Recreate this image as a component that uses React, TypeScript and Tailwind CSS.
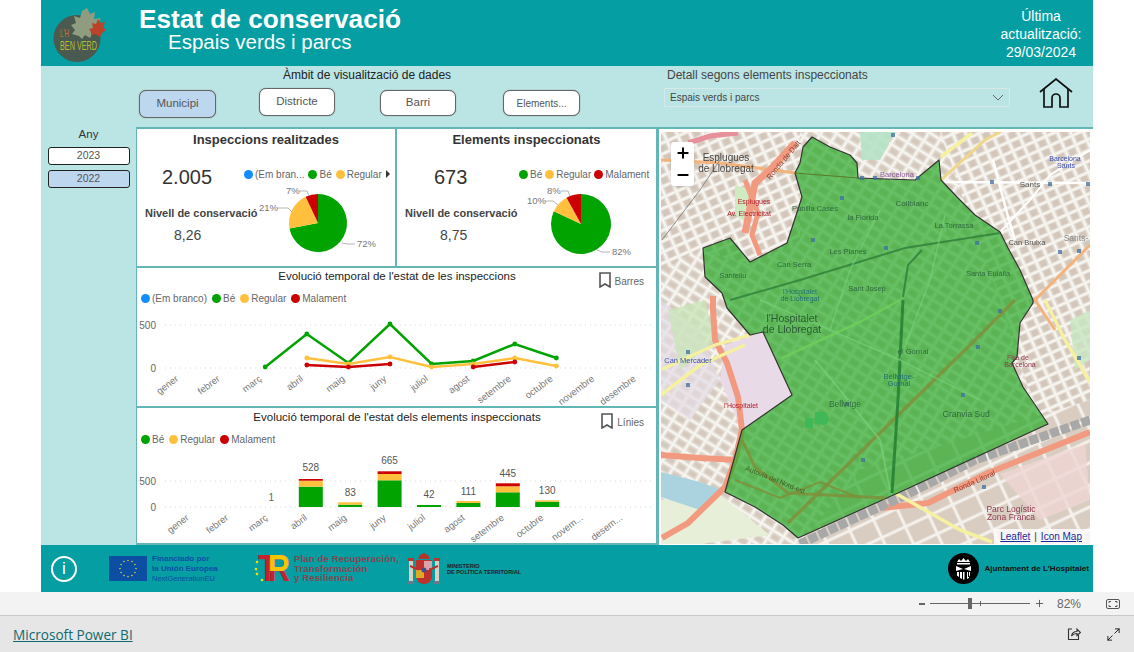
import React from 'react';
import { Maximize2, Minus, Plus } from 'lucide-react';

const GREEN = '#00a300';
const YELLOW = '#ffc13d';
const RED = '#cc0000';
const BLUE = '#118dff';
const MONTHS = ['gener', 'febrer', 'març', 'abril', 'maig', 'juny', 'juliol', 'agost', 'setembre', 'octubre', 'novembre', 'desembre'];

type LegendItem = { label: string; color: string };

function Legend({ items, gap }: { items: LegendItem[]; gap: string }) {
    return (
        <div className={`flex items-center ${gap}`}>
            {items.map((item) => (
                <div key={item.label} className="flex items-center gap-[2px] text-[#666] whitespace-nowrap text-[10px]">
                    <span className="w-[9px] h-[9px] rounded-full" style={{ background: item.color }} />
                    <span>{item.label}</span>
                </div>
            ))}
        </div>
    );
}

function slice(cx: number, cy: number, r: number, from: number, to: number) {
    const a0 = (from / 100) * Math.PI * 2 - Math.PI / 2;
    const a1 = (to / 100) * Math.PI * 2 - Math.PI / 2;
    const large = to - from > 50 ? 1 : 0;
    return `M${cx} ${cy}L${cx + r * Math.cos(a0)} ${cy + r * Math.sin(a0)}A${r} ${r} 0 ${large} 1 ${cx + r * Math.cos(a1)} ${cy + r * Math.sin(a1)}Z`;
}

type PieLabel = { text: string; x: number; y: number; line: string };

function Pie({ box, cx, cy, r, values, labels }: { box: string; cx: number; cy: number; r: number; values: number[]; labels: PieLabel[] }) {
    const colors = [GREEN, YELLOW, RED];
    let acc = 0;
    return (
        <svg viewBox={box} className="w-[135px] h-[85px] overflow-visible">
            {values.map((v, i) => {
                const d = slice(cx, cy, r, acc, acc + v);
                acc += v;
                return <path key={i} d={d} fill={colors[i]} />;
            })}
            {labels.map((l) => (
                <g key={l.text}>
                    <polyline points={l.line} fill="none" stroke="#b5b5b5" strokeWidth="1" />
                    <text x={l.x} y={l.y} fontSize="9.5" fill="#777">{l.text}</text>
                </g>
            ))}
        </svg>
    );
}

function KpiCard(props: {
    title: string; value: string; score: string; legend: LegendItem[]; more?: boolean; width: string;
    valuePad: string; scorePad: string; labelPad: string; legendPad: string; legendGap: string; children: React.ReactNode;
}) {
    return (
        <div className={`${props.width} h-[141px] border-x border-y-2 border-[#62b6b6] bg-white flex flex-col`}>
            <div className="h-[21px] text-center text-[13px] font-bold text-[#333] leading-[21px]">{props.title}</div>
            <div className="flex flex-1">
                <div className="w-[121px] shrink-0 flex flex-col">
                    <div className={`mt-[14px] text-[20px] leading-[26px] text-[#333] ${props.valuePad}`}>{props.value}</div>
                    <div className={`mt-[16px] text-[11px] font-bold text-[#444] leading-[14px] whitespace-nowrap ${props.labelPad}`}>Nivell de conservació</div>
                    <div className={`mt-[6px] text-[14px] leading-[18px] text-[#444] ${props.scorePad}`}>{props.score}</div>
                </div>
                <div className="flex flex-col flex-1">
                    <div className={`mt-[17px] h-[14px] flex items-center ${props.legendPad}`}>
                        <Legend items={props.legend} gap={props.legendGap} />
                        {props.more && <span className="ml-[4px] w-0 h-0 border-y-[4px] border-y-transparent border-l-[4px] border-l-[#333]" />}
                    </div>
                    {props.children}
                </div>
            </div>
        </div>
    );
}

function ChartToggle({ label }: { label: string }) {
    return (
        <div className="flex items-start justify-end gap-[4px] pr-[12px] pt-[3px] text-[10px] text-[#666]">
            <svg width="12" height="16" viewBox="0 0 12 16" fill="none" stroke="#555" strokeWidth="1.6">
                <path d="M1 1h10v14l-5-3-5 3z" />
            </svg>
            <span className="mt-[2px]">{label}</span>
        </div>
    );
}

function ChartCard({ title, toggle, height, headHeight, legend, legendGap, children }: { title: string; toggle: string; height: string; headHeight: string; legend: LegendItem[]; legendGap: string; children: React.ReactNode }) {
    return (
        <div className={`${height} border-x border-b-2 border-[#62b6b6] bg-white flex flex-col pl-[1px]`}>
            <div className={`shrink-0 flex flex-col justify-end ${headHeight}`}>
                <div className="grid grid-cols-[1fr_auto_1fr] h-[16px]">
                    <span />
                    <span className="text-[11.5px] leading-[14px] text-[#222]">{title}</span>
                    <ChartToggle label={toggle} />
                </div>
                <div className="pl-[3px] pt-[6px]">
                    <Legend items={legend} gap={legendGap} />
                </div>
            </div>
            {children}
        </div>
    );
}

function AxisLabels({ xs, y, labels }: { xs: number[]; y: number; labels: string[] }) {
    return (
        <>
            {labels.map((m, i) => (
                <text key={m} x={xs[i] - 3} y={y} fontSize="9.5" fill="#777" textAnchor="end" transform={`rotate(-37 ${xs[i] - 3} ${y})`}>{m}</text>
            ))}
        </>
    );
}

function LineChart() {
    const x = (i: number) => 182 + i * 41.6;
    const xs = MONTHS.map((_, i) => x(i));
    const series = [
        { color: GREEN, segs: [[[2, 367], [3, 334], [4, 363], [5, 324], [6, 364], [7, 361], [8, 344], [9, 358]]] },
        { color: YELLOW, segs: [[[3, 358], [4, 364], [5, 357], [6, 367], [7, 364], [8, 358], [9, 366]]] },
        { color: RED, segs: [[[3, 365], [4, 367], [5, 364]], [[7, 367], [8, 362]]] },
    ];
    return (
        <svg viewBox="138 308 517 98" className="w-[517px] h-[98px] overflow-visible">
            {[325, 368].map((y) => <line key={y} x1="165" x2="652" y1={y} y2={y} stroke="#d8d8d8" strokeDasharray="1 4" />)}
            <text x="156" y="329" fontSize="10" fill="#666" textAnchor="end">500</text>
            <text x="156" y="372" fontSize="10" fill="#666" textAnchor="end">0</text>
            {series.map((s) => s.segs.map((seg, k) => (
                <g key={s.color + k}>
                    <polyline points={seg.map(([m, y]) => `${x(m)},${y}`).join(' ')} fill="none" stroke={s.color} strokeWidth="2.5" />
                    {seg.map(([m, y]) => <circle key={m} cx={x(m)} cy={y} r="2.4" fill={s.color} />)}
                </g>
            )))}
            <AxisLabels xs={xs} y={380} labels={MONTHS} />
        </svg>
    );
}

function BarChart() {
    const x = (i: number) => 192.6 + i * 39.4;
    const xs = MONTHS.map((_, i) => x(i));
    const labels = MONTHS.map((m) => (m === 'novembre' ? 'novem...' : m === 'desembre' ? 'desem...' : m));
    // month, [green top, yellow top, red top], total text
    const bars: [number, number[], string, number][] = [
        [3, [486.7, 480.7, 479], '528', 468],
        [4, [504.7, 502.3, 502.3], '83', 493],
        [5, [480.3, 474, 471.3], '665', 461],
        [6, [505, 505, 505], '42', 495],
        [7, [503, 501, 501], '111', 492],
        [8, [492.3, 486.3, 483.3], '445', 474],
        [9, [501.7, 500.3, 500.3], '130', 491],
    ];
    return (
        <svg viewBox="138 450 517 92" className="w-[517px] h-[92px] overflow-visible">
            {[481, 507].map((y) => <line key={y} x1="165" x2="652" y1={y} y2={y} stroke="#d8d8d8" strokeDasharray="1 4" />)}
            <text x="156" y="485" fontSize="10" fill="#666" textAnchor="end">500</text>
            <text x="156" y="511" fontSize="10" fill="#666" textAnchor="end">0</text>
            <text x={x(2)} y="501" fontSize="10" fill="#666" textAnchor="middle">1</text>
            {bars.map(([m, tops, text, ty]) => (
                <g key={m}>
                    <rect x={x(m) - 12} y={tops[0]} width="24" height={507 - tops[0]} fill={GREEN} />
                    <rect x={x(m) - 12} y={tops[1]} width="24" height={tops[0] - tops[1]} fill={YELLOW} />
                    <rect x={x(m) - 12} y={tops[2]} width="24" height={tops[1] - tops[2]} fill={RED} />
                    <text x={x(m)} y={ty + 3} fontSize="10" fill="#555" textAnchor="middle">{text}</text>
                </g>
            ))}
            <AxisLabels xs={xs} y={519} labels={labels} />
        </svg>
    );
}

const AREA = '812,137 830,147 850,155 857,163 858,178 915,180 939,160 941,180 957,197 975,215 1000,232 1008,248 1020,270 1033,300 1033,303 1020,323 1017,357 1012,363 1023,387 1048,424 898,493 798,538 783,525 755,507 725,492 742,430 792,395 763,332 750,335 727,308 722,293 705,277 703,248 730,238 750,262 787,243 802,197 795,173 800,163 803,147';

const MAP_LABELS: [string, number, number, number, string][] = [
    ['Esplugues', 726, 161, 10, '#444'], ['de Llobregat', 726, 172, 10, '#444'],
    ['Barcelona', 897, 177, 7.5, '#8a5a9a'], ['Collblanc', 912, 206, 8, '#2f6a3f'],
    ['Pubilla Cases', 815, 211, 7.5, '#2f6a3f'], ['la Florida', 863, 220, 7.5, '#2f6a3f'],
    ['La Torrassa', 954, 228, 7.5, '#2f6a3f'], ['Les Planes', 848, 254, 7.5, '#2f6a3f'],
    ['Can Serra', 794, 267, 7.5, '#2f6a3f'], ['Sanfeliu', 733, 278, 7.5, '#2f6a3f'],
    ['Sant Josep', 867, 291, 7.5, '#2f6a3f'], ['Santa Eulàlia', 988, 276, 7.5, '#2f6a3f'],
    ['Sants', 1030, 187, 8, '#555'], ['Can Bruixa', 1027, 245, 7.5, '#555'], ['Sants-', 1076, 241, 8.5, '#888'],
    ['Barcelona', 1065, 161, 7, '#3a4fb0'], ['Sants', 1066, 168, 7, '#3a4fb0'],
    ["l'Hospitalet", 800, 294, 7, '#1f6f70'], ['de Llobregat', 800, 301, 7, '#1f6f70'],
    ["l'Hospitalet", 792, 322, 10.5, '#2a5a35'], ['de Llobregat', 792, 333, 10.5, '#2a5a35'],
    ['Can Mercader', 688, 363, 7.5, '#3a4fb0'], ['el Gornal', 913, 354, 7.5, '#2f6a3f'],
    ['Bellvitge-', 899, 379, 7.5, '#1f6f70'], ['Gornal', 899, 386, 7.5, '#1f6f70'],
    ['Bellvitge', 845, 407, 8.5, '#2f6a3f'], ['Granvia Sud', 966, 417, 8.5, '#2f6a3f'],
    ['Parc Logístic', 1011, 512, 8.5, '#8f3a50'], ['Zona Franca', 1011, 520, 8.5, '#8f3a50'],
    ['Esplugues', 754, 204, 7, '#b3202c'], ['Av. Electricitat', 749, 216, 7, '#b3202c'],
    ["l'Hospitalet", 741, 408, 7, '#b3202c'], ['Fira de', 1018, 360, 7, '#8f3a50'], ['Barcelona', 1020, 367, 7, '#8f3a50'],
];

const METRO = [[862, 178], [875, 178], [918, 178], [992, 182], [1050, 184], [1088, 184], [893, 135], [842, 198], [813, 240], [886, 248], [977, 243], [847, 404], [863, 460], [963, 395], [978, 347], [1000, 311], [688, 352], [688, 385], [984, 487], [1060, 252], [1079, 251], [1079, 358]];

function MapView() {
    return (
        <div className="relative w-[429px] h-[412px] overflow-hidden">
            <svg viewBox="661 132 429 412" className="w-[429px] h-[412px] blur-[0.35px]">
                <defs>
                    <pattern id="blocksA" width="13" height="10" patternUnits="userSpaceOnUse" patternTransform="rotate(32)">
                        <rect width="13" height="10" fill="#f7f5f0" />
                        <rect x="1" y="1" width="11" height="8" fill="#e6e0d8" />
                        <rect x="2.500" y="2.500" width="8" height="5" fill="#d5c9bd" />
                    </pattern>
                    <pattern id="blocksB" width="12" height="10" patternUnits="userSpaceOnUse" patternTransform="rotate(-24)">
                        <rect width="12" height="10" fill="#f7f5f0" />
                        <rect x="1" y="1" width="10" height="8" fill="#e8e1da" />
                        <rect x="2.500" y="2" width="7" height="6" fill="#d3c7bb" />
                    </pattern>
                    <pattern id="blocksC" width="26" height="20" patternUnits="userSpaceOnUse" patternTransform="rotate(-25)">
                        <rect width="26" height="20" fill="#f5f1ec" />
                        <rect x="1.500" y="1.500" width="23" height="17" fill="#d9cdc2" />
                    </pattern>
                </defs>
                <rect x="661" y="132" width="429" height="412" fill="url(#blocksA)" />
                <polygon points="940,132 1090,132 1090,440 1040,425 1000,300 960,190" fill="url(#blocksB)" />
                <polygon points="661,132 800,132 800,240 750,265 700,250 661,270" fill="url(#blocksB)" />
                <polygon points="860,470 1090,400 1090,544 800,544" fill="url(#blocksC)" />
                <polygon points="1000,474 1085,444 1090,500 1040,520" fill="#efd6d3" opacity="0.8" />
                <polygon points="763,332 792,395 742,430 720,380 725,345" fill="#e8dae6" />
                <polygon points="661,300 700,330 720,380 690,420 661,400" fill="#e4dbe4" opacity="0.7" />
                <polygon points="661,500 720,495 770,535 700,544 661,544" fill="#e7efd8" />
                <polygon points="661,472 700,482 724,491 700,510 661,497" fill="#aad3df" />
                <polygon points="860,132 895,132 880,160 862,160" fill="#b5e3c6" opacity="0.9" />
                <polygon points="735,185 752,190 750,225 735,215" fill="#cfeac0" />
                <polygon points="668,310 705,300 715,340 680,370" fill="#c8e6b8" opacity="0.75" />
                <polygon points="1070,320 1090,310 1090,360 1075,370" fill="#c8e6c0" opacity="0.8" />
                <polyline points="688,143 710,136 738,133" fill="none" stroke="#e88f9c" strokeWidth="5" />
                <polyline points="661,160 720,163 795,173" fill="none" stroke="#f2b37c" strokeWidth="3" />
                <polyline points="795,143 770,170 755,183 745,233" fill="none" stroke="#f19a80" strokeWidth="7" />
                <polyline points="745,180 758,213 752,235 760,255" fill="none" stroke="#f19a80" strokeWidth="5" />
                <polyline points="713,296 713,310 715,340 727,363 738,397 742,430 735,460 725,487 688,523 662,538" fill="none" stroke="#f19a80" strokeWidth="6" />
                <polyline points="661,455 700,458 738,460" fill="none" stroke="#f19a80" strokeWidth="6" />
                <polyline points="1090,432 988,473 928,503 882,508" fill="none" stroke="#f19a80" strokeWidth="6" />
                <polyline points="1090,420 975,460 902,497 860,516 800,544" fill="none" stroke="#a8a8a8" strokeWidth="9" strokeDasharray="9 2" />
                <polyline points="895,493 960,530 992,542" fill="none" stroke="#f5f1a0" strokeWidth="3.500" />
                <polyline points="1045,300 1065,340 1090,382" fill="none" stroke="#f5f1a0" strokeWidth="3.500" />
                <polyline points="941,157 972,133" fill="none" stroke="#f5f1a0" strokeWidth="3.500" />
                <polyline points="941,180 985,140 1000,132" fill="none" stroke="#f0d68a" strokeWidth="3" />
                <polyline points="661,395 700,365 745,345" fill="none" stroke="#f5f1a0" strokeWidth="3.500" />
                <polyline points="661,370 715,345 750,335" fill="none" stroke="#f5f1a0" strokeWidth="3" />
                <polyline points="941,182 1090,183" fill="none" stroke="#ffffff" strokeWidth="2.500" />
                <polyline points="993,160 1007,213 1015,240" fill="none" stroke="#ffffff" strokeWidth="2.500" />
                <polyline points="1090,245 1050,285 1035,300 1055,330" fill="none" stroke="#f2b37c" strokeWidth="3" />
                <polyline points="662,240 700,190 720,160" fill="none" stroke="#777" strokeWidth="0.8" />
                <polyline points="1090,150 1050,175 1030,200 1000,232" fill="none" stroke="#ffffff" strokeWidth="2" />
                <polygon points={AREA} fill="#22a822" fillOpacity="0.68" stroke="#333" strokeWidth="1.200" strokeLinejoin="round" />
                <polyline points="900,300 860,322 782,358" fill="none" stroke="#6fd05a" strokeWidth="2.500" opacity="0.8" />
                <polyline points="1015,300 970,345 888,425 788,523" fill="none" stroke="#7f8f3a" strokeWidth="3.500" opacity="0.8" />
                <polyline points="903,300 898,400 892,493" fill="none" stroke="#1f7a2f" strokeWidth="3" opacity="0.8" />
                <polyline points="730,300 800,280 905,248 1000,233" fill="none" stroke="#2f7d3a" strokeWidth="2" opacity="0.8" />
                <polyline points="922,250 908,265 903,297" fill="none" stroke="#2f7d3a" strokeWidth="2" opacity="0.8" />
                <polyline points="742,440 755,467 788,493 885,498" fill="none" stroke="#7f8f3a" strokeWidth="3" opacity="0.85" />
                <polyline points="735,480 780,498 820,482 860,498" fill="none" stroke="#7f8f3a" strokeWidth="2" opacity="0.85" />
                <polyline points="795,173 858,178" fill="none" stroke="#5c7a2a" strokeWidth="1.200" />
                <polyline points="815,360 840,390 880,440 890,490" fill="none" stroke="#7ad27a" strokeWidth="1.800" opacity="0.7" />
                <polyline points="760,300 830,330 900,360 980,400" fill="none" stroke="#7ad27a" strokeWidth="1.500" opacity="0.6" />
                <polyline points="880,210 850,270 830,330" fill="none" stroke="#7ad27a" strokeWidth="1.500" opacity="0.6" />
                <polyline points="945,215 930,280 900,360" fill="none" stroke="#7ad27a" strokeWidth="1.500" opacity="0.6" />
                <rect x="805" y="418" width="8" height="10" fill="#3fb857" />
                <rect x="815" y="412" width="10" height="12" fill="#3fb857" />
                <circle cx="823" cy="419" r="6" fill="#3fb857" />
                {METRO.map(([x, y]) => <rect key={`${x}-${y}`} x={x - 2} y={y - 2} width="4" height="4" fill="#3f6fa0" opacity="0.75" />)}
                {MAP_LABELS.map(([t, x, y, s, c]) => (
                    <text key={`${t}-${x}`} x={x} y={y} fontSize={s} fill={c} textAnchor="middle">{t}</text>
                ))}
                <text x="955" y="493" fontSize="7.500" fill="#8f3a30" transform="rotate(-24 955 493)">Ronda Litoral</text>
                <text x="745" y="470" fontSize="7" fill="#3f5a1f" transform="rotate(22 745 470)">Autovia del Nord-est</text>
                <text x="770" y="180" fontSize="7.500" fill="#8f3a30" transform="rotate(-50 770 180)">Ronda de Dalt</text>
            </svg>
            <div className="absolute left-[10px] top-[10px] w-[23px] h-[44px] bg-white rounded-[3px] flex flex-col items-center justify-around shadow">
                <Plus size={16} strokeWidth={3} className="text-black" />
                <Minus size={16} strokeWidth={3} className="text-black" />
            </div>
            <div className="absolute right-0 bottom-0 h-[15px] pl-[6px] pr-[8px] bg-white/80 flex items-center gap-[4px] text-[10px] text-[#333]">
                <span className="text-[#1a2a9c] underline">Leaflet</span>
                <span>|</span>
                <span className="text-[#1a2a9c] underline">Icon Map</span>
            </div>
        </div>
    );
}

function Logo() {
    return (
        <svg width="60" height="60" viewBox="50 6 60 60" className="overflow-visible">
            <circle cx="77" cy="38.500" r="23.500" fill="#4a5a50" />
            <polygon points="87,8 90,14 95,12 94,19 101,18 97,25 100,29 93,33 90,38 85,35 82,39 79,36 72,34 75,30 71,25 76,23 74,16 80,18 82,11" fill="#8f9c80" />
            <polygon points="98,19 101,23 105,22 103,27 106,30 102,33 100,37 95,34 91,36 91,32 89,29 93,28 92,23 96,24" fill="#b8452a" />
            <text x="60" y="37" fontSize="11" fill="#c4752c" textLength="9" lengthAdjust="spacingAndGlyphs">L'H</text>
            <text x="60" y="50" fontSize="12.500" fill="#b8bc30" textLength="37" lengthAdjust="spacingAndGlyphs">BEN VERD</text>
        </svg>
    );
}

function FilterButton({ label, className }: { label: string; className: string }) {
    return (
        <div className={`border border-[#666] rounded-[7px] flex items-center justify-center text-[#555] shadow-[0_0_1px_#666] ${className}`}>
            {label}
        </div>
    );
}

function EuFlag() {
    const stars = Array.from({ length: 12 }, (_, i) => i * Math.PI / 6);
    return (
        <svg width="38" height="25" viewBox="0 0 38 25">
            <rect width="38" height="25" fill="#0b4ea2" />
            {stars.map((a) => <circle key={a} cx={19 + 8 * Math.cos(a)} cy={12.5 + 8 * Math.sin(a)} r="0.8" fill="#d9d24a" />)}
        </svg>
    );
}

function TrLogo() {
    return (
        <svg width="35" height="29" viewBox="0 0 35 29" className="overflow-visible">
            <defs>
                <clipPath id="rTop"><rect x="12" y="0" width="24" height="17" /></clipPath>
            </defs>
            <text x="3" y="27" fontSize="36" fontWeight="700" fontFamily="'Liberation Sans', sans-serif" fill="#c8202f" textLength="19" lengthAdjust="spacingAndGlyphs">T</text>
            <text x="13" y="27" fontSize="36" fontWeight="700" fontFamily="'Liberation Sans', sans-serif" fill="#c8202f" textLength="22" lengthAdjust="spacingAndGlyphs">R</text>
            <text x="13" y="27" fontSize="36" fontWeight="700" fontFamily="'Liberation Sans', sans-serif" fill="#f6c500" textLength="22" lengthAdjust="spacingAndGlyphs" clipPath="url(#rTop)">R</text>
            {[[2, 8], [1, 15], [2, 20], [7, 26]].map(([x, y]) => <circle key={y} cx={x} cy={y} r="1.300" fill="#f6e000" />)}
        </svg>
    );
}

function Escudo() {
    return (
        <svg width="34" height="34" viewBox="0 0 34 34">
            <rect x="2" y="9" width="4" height="20" fill="#d9d2c4" />
            <rect x="28" y="9" width="4" height="20" fill="#d9d2c4" />
            <rect x="1" y="6" width="6" height="3" fill="#b8352b" />
            <rect x="27" y="6" width="6" height="3" fill="#b8352b" />
            <path d="M9 8h16v16c0 5-4 8-8 8s-8-3-8-8z" fill="#c0312b" />
            <rect x="17" y="9" width="8" height="9" fill="#d9a3a8" />
            <rect x="9" y="18" width="8" height="8" fill="#e0a825" />
            <circle cx="17" cy="18" r="2.500" fill="#3b4f8f" />
            <path d="M11 7l2-4 4-2 4 2 2 4z" fill="#b8352b" />
            <path d="M3 14c5 2 6 4 9 3M31 14c-5 2-6 4-9 3" stroke="#c0312b" strokeWidth="2" fill="none" />
            <rect x="1" y="29" width="6" height="3" fill="#6a7a8a" />
            <rect x="27" y="29" width="6" height="3" fill="#6a7a8a" />
        </svg>
    );
}

function AjuntamentLogo() {
    return (
        <svg width="31" height="31" viewBox="0 0 31 31">
            <circle cx="15.500" cy="15.500" r="15.500" fill="#000" />
            <path d="M9 9l2-3 2 2 2.500-3 2.500 3 2-2 2 3z" fill="#fff" />
            <rect x="9" y="10" width="13" height="1.500" fill="#fff" />
            <path d="M8 13l7 3-7 2zM23 13l-7 3 7 2z" fill="#fff" />
            <path d="M9 19h2v5l-2-1.500zM12 19h2v7l-2-1zM17 19h2v7l2-1v-6zM15 19h1.500v7.500h-1.500zM20 19h2v3.500l-2 1.500z" fill="#fff" />
        </svg>
    );
}

export default function App() {
    return (
        <div className="w-[1134px] h-[652px] overflow-hidden bg-white font-['Liberation_Sans',Arial,sans-serif]">
            <div className="ml-[41px] w-[1052px] h-[592px] flex flex-col">
                <header className="h-[66px] bg-[#049ea3] flex text-white">
                    <div className="w-[98px] pl-[9px] pt-[6px]"><Logo /></div>
                    <div className="flex-1 pt-[7px]">
                        <div className="text-[26.2px] font-bold leading-[25px]">Estat de conservació</div>
                        <div className="pl-[29px] text-[20.5px] leading-[20px]">Espais verds i parcs</div>
                    </div>
                    <div className="w-[104px] pt-[7px] text-center text-[14px] leading-[18px]">
                        <div>Última</div>
                        <div className="whitespace-nowrap">actualització:</div>
                        <div>29/03/2024</div>
                    </div>
                </header>

                <section className="h-[479px] bg-[#bbe5e4] flex flex-col">
                    <div className="h-[61px] flex shrink-0">
                        <div className="w-[623px] flex flex-col">
                            <div className="pl-[242px] pt-[2px] text-[12px] leading-[14px] text-[#222]">Àmbit de visualització de dades</div>
                            <div className="flex items-start pl-[98px] pt-[6px]">
                                <FilterButton label="Municipi" className="w-[77px] h-[28px] mt-[2px] bg-[#bdd7ee] text-[11.5px]" />
                                <FilterButton label="Districte" className="w-[76px] h-[28px] ml-[43px] bg-white text-[11.5px]" />
                                <FilterButton label="Barri" className="w-[76px] h-[26px] mt-[2px] ml-[45px] bg-white text-[11.5px]" />
                                <FilterButton label="Elements..." className="w-[77px] h-[26px] mt-[2px] ml-[47px] bg-white text-[10px]" />
                            </div>
                        </div>
                        <div className="flex-1 flex">
                            <div className="w-[346px]">
                                <div className="pl-[3px] pt-[2px] text-[12px] leading-[14px] text-[#444] whitespace-nowrap">Detall segons elements inspeccionats</div>
                                <div className="mt-[6px] h-[19px] border border-[#d6e9e8] flex items-center justify-between px-[5px] text-[10px] text-[#444]">
                                    <span>Espais verds i parcs</span>
                                    <svg width="12" height="7" viewBox="0 0 12 7" fill="none" stroke="#666"><path d="M1 1l5 5 5-5" /></svg>
                                </div>
                            </div>
                            <div className="pl-[29px] pt-[12px]">
                                <svg width="35" height="31" viewBox="0 0 35 31" fill="none" stroke="#111" strokeWidth="1.700">
                                    <path d="M1 14L17 1l16 13" />
                                    <path d="M5 11v18h8v-9a4 4 0 0 1 8 0v9h8V11" />
                                </svg>
                            </div>
                        </div>
                    </div>

                    <div className="flex-1 flex">
                        <div className="w-[95px] shrink-0 flex flex-col items-center">
                            <div className="h-[20px] text-[11.5px] leading-[14px] text-[#333]">Any</div>
                            <div className="w-[82px] h-[18px] border border-[#222] rounded-[3px] bg-white text-[10.5px] text-[#555] flex items-center justify-center">2023</div>
                            <div className="w-[82px] h-[18px] mt-[5px] border border-[#222] rounded-[3px] bg-[#bdd7ee] text-[10.5px] text-[#555] flex items-center justify-center">2022</div>
                        </div>

                        <div className="w-[521px] shrink-0 flex flex-col">
                            <div className="flex">
                                <KpiCard width="w-[260px]" title="Inspeccions realitzades" value="2.005" score="8,26" more
                                    valuePad="pl-[25px]" scorePad="pl-[37px]" labelPad="pl-[8px]" legendPad="-ml-[14px]" legendGap="gap-[4px]"
                                    legend={[{ label: '(Em bran...', color: BLUE }, { label: 'Bé', color: GREEN }, { label: 'Regular', color: YELLOW }]}>
                                    <Pie box="258 181 135 85" cx={318} cy={223} r={29} values={[72, 21, 7]} labels={[
                                        { text: '7%', x: 286, y: 194, line: '299,191 307,191 309,196' },
                                        { text: '21%', x: 259, y: 211, line: '277,208 288,208 292,212' },
                                        { text: '72%', x: 357, y: 247, line: '342,243 348,244 355,244' },
                                    ]} />
                                </KpiCard>
                                <KpiCard width="w-[261px]" title="Elements inspeccionats" value="673" score="8,75"
                                    valuePad="pl-[37px]" scorePad="pl-[43px]" labelPad="pl-[8px]" legendPad="pl-[1px]" legendGap="gap-[3px]"
                                    legend={[{ label: 'Bé', color: GREEN }, { label: 'Regular', color: YELLOW }, { label: 'Malament', color: RED }]}>
                                    <Pie box="518 181 135 85" cx={581} cy={224} r={30} values={[82, 10, 8]} labels={[
                                        { text: '8%', x: 547, y: 194, line: '561,191 568,191 570,196' },
                                        { text: '10%', x: 527, y: 204, line: '545,201 553,201 558,205' },
                                        { text: '82%', x: 612, y: 255, line: '597,250 602,252 610,252' },
                                    ]} />
                                </KpiCard>
                            </div>
                            <ChartCard title="Evolució temporal de l'estat de les inspeccions" toggle="Barres" height="h-[140px]" headHeight="h-[40px] pb-[2px]" legendGap="gap-[5px]"
                                legend={[{ label: '(Em branco)', color: BLUE }, { label: 'Bé', color: GREEN }, { label: 'Regular', color: YELLOW }, { label: 'Malament', color: RED }]}>
                                <LineChart />
                            </ChartCard>
                            <ChartCard title="Evolució temporal de l'estat dels elements inspeccionats" toggle="Línies" height="h-[137px]" headHeight="h-[42px] pb-[3px]" legendGap="gap-[5px]"
                                legend={[{ label: 'Bé', color: GREEN }, { label: 'Regular', color: YELLOW }, { label: 'Malament', color: RED }]}>
                                <BarChart />
                            </ChartCard>
                        </div>

                        <div className="w-[436px] shrink-0 bg-white border-t-2 border-l-2 border-[#62b6b6] pl-[2px] pt-[3px]">
                            <MapView />
                        </div>
                    </div>
                </section>

                <footer className="h-[47px] bg-[#049ea3] flex items-center">
                    <div className="w-[26px] h-[26px] ml-[10px] rounded-full border-2 border-white flex items-center justify-center text-white text-[17px] leading-none">i</div>
                    <div className="ml-[32px]"><EuFlag /></div>
                    <div className="ml-[5px] w-[103px] text-[8px] font-bold leading-[10px] text-[#0b4ea2] whitespace-nowrap">
                        <div>Financiado por</div>
                        <div>la Unión Europea</div>
                        <div className="font-normal text-[7.5px]">NextGenerationEU</div>
                    </div>
                    <TrLogo />
                    <div className="ml-[4px] w-[113px] text-[9.5px] font-bold leading-[9.5px] tracking-[0.15px] text-[#84474f] whitespace-nowrap">
                        <div>Plan de Recuperación,</div>
                        <div>Transformación</div>
                        <div>y Resiliencia</div>
                    </div>
                    <Escudo />
                    <div className="ml-[6px] text-[5.6px] font-bold leading-[6px] text-[#222] whitespace-nowrap">
                        <div>MINISTERIO</div>
                        <div>DE POLÍTICA TERRITORIAL</div>
                    </div>
                    <div className="ml-auto flex items-center gap-[5px] pr-[4px]">
                        <AjuntamentLogo />
                        <span className="text-[8px] font-bold text-[#111] tracking-[0.05px] whitespace-nowrap">Ajuntament de L'Hospitalet</span>
                    </div>
                </footer>
            </div>

            <div className="h-[23px] bg-[#f3f3f3] flex items-center justify-end text-[#666]">
                <span className="w-[6px] h-[2px] bg-[#666]" />
                <div className="relative ml-[5px] w-[100px] h-[1px] bg-[#666]">
                    <span className="absolute left-[38px] -top-[5px] w-[4px] h-[11px] bg-[#666]" />
                    <span className="absolute left-[50px] -top-[2px] w-[1px] h-[5px] bg-[#666]" />
                </div>
                <Plus size={11} strokeWidth={2} className="ml-[4px] text-[#555]" />
                <span className="ml-[12px] text-[12px]">82%</span>
                <svg className="ml-[25px] mr-[14px]" width="14" height="10" viewBox="0 0 14 10" fill="none" stroke="#555">
                    <rect x="0.500" y="0.500" width="13" height="9" rx="1.500" />
                    <path d="M3 4V2.500h2M9 2.500h2V4M3 6v1.500h2M9 7.500h2V6" />
                </svg>
            </div>
            <div className="h-[37px] bg-[#e6e6e6] border-t border-[#c8c8c8] flex items-center">
                <a className="ml-[13px] mt-[2px] text-[13.6px] font-['Open_Sans',sans-serif] text-[#0f6a70] underline">Microsoft Power BI</a>
                <svg className="ml-auto" width="14" height="14" viewBox="0 0 14 14" fill="none" stroke="#333" strokeWidth="1.100">
                    <path d="M5 2H1.500v10.500h10V8" />
                    <path d="M4.500 9c.5-3 3-4.500 5.500-4.500V2l3.500 3.500L10 8.500V6.500c-2 0-4 .5-5.500 2.500z" />
                </svg>
                <Maximize2 size={15} strokeWidth={1.3} className="ml-[25px] mr-[13px] text-black" />
            </div>
        </div>
    );
}
